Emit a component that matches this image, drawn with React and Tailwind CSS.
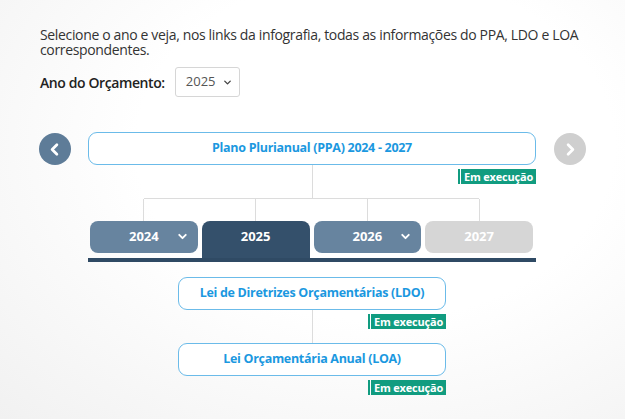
import { ChevronDown, ChevronLeft, ChevronRight } from 'lucide-react'

const years = [
  { year: '2024', state: 'other' },
  { year: '2025', state: 'active' },
  { year: '2026', state: 'other' },
  { year: '2027', state: 'disabled' },
]

function Badge() {
  return (
    <div className="flex items-stretch h-[15px]">
      <span className="w-[2px] bg-[#119c80]" />
      <span className="ml-[1px] px-[3px] bg-[#119c80] text-white text-[11px] leading-[15px] font-bold tracking-[-0.2px]">
        Em execução
      </span>
    </div>
  )
}

function LawBox({ children, className = '' }) {
  return (
    <div className={`flex items-center justify-center bg-white border border-[#6bbbe9] rounded-[9px] text-[#1b98e0] text-[12.5px] tracking-[-0.3px] font-bold ${className}`}>
      {children}
    </div>
  )
}

// vertical connector with the status badge sitting at the right
function Connector({ height }) {
  return (
    <div className={`flex ${height}`}>
      <div className="flex-1" />
      <div className="w-px bg-[#dcdcdc]" />
      <div className="flex-1 flex justify-end items-start pt-[4px]">
        <Badge />
      </div>
    </div>
  )
}

export default function App() {
  return (
    <div
      className="w-[625px] h-[419px] overflow-hidden bg-[radial-gradient(ellipse_at_60%_35%,#ffffff_45%,#f1f1f1_100%)] pl-[40px] pt-[27px] text-[#333]"
      style={{ fontFamily: '"Open Sans", "Liberation Sans", sans-serif' }}
    >
      <p className="w-[548px] text-[14px] leading-[15px] tracking-[-0.35px]">
        Selecione o ano e veja, nos links da infografia, todas as informações do PPA, LDO e LOA correspondentes.
      </p>

      <div className="flex items-center mt-[10px]">
        <span className="text-[14px] font-semibold text-[#222] tracking-[-0.4px]">Ano do Orçamento:</span>
        <div className="ml-[10px] w-[65px] h-[30px] flex items-center justify-between pl-[10px] pr-[6px] bg-white border border-[#d6d6d6] rounded-[3px] text-[13px] text-[#555]">
          2025
          <ChevronDown size={11} strokeWidth={3} className="text-[#444]" />
        </div>
      </div>

      {/* Timeline */}
      <div className="flex items-start mt-[35px] -ml-[1px]">
        <div className="mt-[1px] w-[32px] h-[32px] rounded-full bg-[#5e7c98] flex items-center justify-center">
          <ChevronLeft size={19} strokeWidth={3.5} className="text-white -ml-[1px]" />
        </div>

        <div className="ml-[17px] w-[448px]">
          <LawBox className="h-[33px]">Plano Plurianual (PPA) 2024 - 2027</LawBox>
          <Connector height="h-[33px]" />
          <div className="ml-[56px] mr-[57px] h-px bg-[#dcdcdc]" />
          <div className="grid grid-cols-4 gap-x-[4px] ml-[2px] mr-[3px]">
            {years.map(y => (
              <div key={y.year} className="flex justify-center h-[22px]">
                <div className="w-px bg-[#dcdcdc]" />
              </div>
            ))}
          </div>

          <div className="grid grid-cols-4 gap-x-[4px] items-start ml-[2px] mr-[3px]">
            {years.map(y => {
              const base = 'relative flex items-center justify-center text-[13px] font-bold text-white'
              if (y.state === 'active') {
                return (
                  <div key={y.year} className={`${base} h-[37px] pb-[5px] rounded-t-[8px] bg-[#34506b]`}>
                    {y.year}
                  </div>
                )
              }
              if (y.state === 'disabled') {
                return (
                  <div key={y.year} className={`${base} h-[32px] rounded-[8px] bg-[#d6d6d6]`}>
                    {y.year}
                  </div>
                )
              }
              return (
                <div key={y.year} className={`${base} h-[32px] rounded-[8px] bg-[#67849f]`}>
                  {y.year}
                  <ChevronDown size={13} strokeWidth={3.5} className="absolute right-[9px] top-[9px]" />
                </div>
              )
            })}
          </div>
          <div className="h-[4px] bg-[#2f4a64]" />

          <div className="w-[268px] mx-auto mt-[15px]">
            <LawBox className="h-[33px]">Lei de Diretrizes Orçamentárias (LDO)</LawBox>
            <Connector height="h-[33px]" />
            <LawBox className="h-[33px]">Lei Orçamentária Anual (LOA)</LawBox>
            <div className="flex justify-end pt-[4px]">
              <Badge />
            </div>
          </div>
        </div>

        <div className="ml-[18px] mt-[1px] w-[32px] h-[32px] rounded-full bg-[#cfcfcf] flex items-center justify-center">
          <ChevronRight size={19} strokeWidth={3.5} className="text-white ml-[1px]" />
        </div>
      </div>
    </div>
  )
}
